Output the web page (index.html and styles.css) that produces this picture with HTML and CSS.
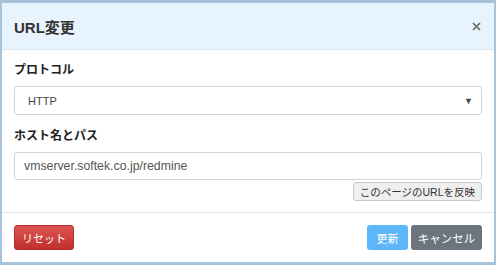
FILE: index.html
```html
<!DOCTYPE html>
<html lang="ja">
<head>
    <meta charset="UTF-8">
    <title>URL変更</title>
    <link rel="stylesheet" href="styles.css">
</head>
<body>
    <div class="dialog">
        <div class="dialog-header">
            <h2 class="dialog-title">URL変更</h2>
            <span class="close-btn">
                <svg width="9" height="9" viewBox="0 0 9 9">
                    <path d="M1 1 L8 8 M8 1 L1 8" stroke="#6b6b6b" stroke-width="1.7" fill="none"/>
                </svg>
            </span>
        </div>
        <div class="dialog-body">
            <div class="form-group">
                <label class="field-label">プロトコル</label>
                <div class="select-box">
                    <span class="select-value">HTTP</span>
                    <span class="select-arrow">▼</span>
                </div>
            </div>
            <div class="form-group second">
                <label class="field-label">ホスト名とパス</label>
                <div class="text-input">vmserver.softek.co.jp/redmine</div>
                <div class="reflect-row">
                    <button class="reflect-btn">このページのURLを反映</button>
                </div>
            </div>
        </div>
        <div class="dialog-footer">
            <button class="btn btn-reset">リセット</button>
            <div class="footer-right">
                <button class="btn btn-update">更新</button>
                <button class="btn btn-cancel">キャンセル</button>
            </div>
        </div>
    </div>
</body>
</html>
```

FILE: styles.css
```css
body {
    margin: 0;
    font-family: "Liberation Sans", "Noto Sans CJK JP", sans-serif;
    color: #333;
}
.dialog {
    width: 496px;
    height: 265px;
    box-sizing: border-box;
    border-style: solid;
    border-color: #a6c3db;
    border-width: 3px 2px 3px 2px;
    background: #fff;
    display: flex;
    flex-direction: column;
}
.dialog-header {
    height: 46px;
    background: #e8f4fd;
    border-bottom: 1px solid #dde5ec;
    display: flex;
    align-items: center;
    justify-content: space-between;
    padding: 0 12px;
}
.dialog-title {
    margin: 0;
    font-size: 15px;
    font-weight: bold;
    color: #333;
}
.close-btn {
    display: flex;
    margin-right: 1px;
    margin-top: 1px;
}
.dialog-body {
    padding: 11px 12px 11px;
    border-bottom: 1px solid #e5e5e5;
}
.field-label {
    display: block;
    font-size: 12px;
    line-height: 18px;
    font-weight: bold;
    color: #222;
    margin-bottom: 7px;
}
.form-group.second {
    margin-top: 12px;
}
.form-group.second .field-label {
    margin-bottom: 7px;
}
.select-box {
    height: 27px;
    border: 1px solid #cdd4da;
    border-radius: 3px;
    display: flex;
    align-items: center;
    justify-content: space-between;
    padding: 0 8px 0 13px;
}
.select-value {
    font-size: 11px;
    color: #444;
}
.select-arrow {
    font-size: 9px;
    color: #444;
}
.text-input {
    height: 26px;
    border: 1px solid #cdd4da;
    border-radius: 3px;
    display: flex;
    align-items: center;
    padding: 0 9px;
    font-size: 12.3px;
    color: #555;
}
.reflect-row {
    display: flex;
    justify-content: flex-end;
    margin-top: 2px;
}
.reflect-btn {
    height: 19px;
    padding: 0 6px;
    white-space: nowrap;
    font-family: "Liberation Sans", "Noto Sans CJK JP", sans-serif;
    font-size: 10.5px;
    color: #333;
    background: #efefef;
    border: 1px solid #c8c8c8;
    border-radius: 3px;
}
.dialog-footer {
    display: flex;
    justify-content: space-between;
    align-items: flex-start;
    padding: 12px 12px 0;
}
.footer-right {
    display: flex;
    gap: 3px;
}
.btn {
    height: 25px;
    padding: 0;
    white-space: nowrap;
    border: none;
    border-radius: 3px;
    color: #fff;
    font-family: "Liberation Sans", "Noto Sans CJK JP", sans-serif;
    font-size: 11px;
}
.btn-reset {
    width: 60px;
    background: linear-gradient(#dc5552, #c1302c);
    border: 1px solid #b52b27;
}
.btn-update {
    width: 41px;
    background: #5db5fa;
}
.btn-cancel {
    width: 71px;
    background: #6c757d;
    font-size: 11.5px;
}
```
